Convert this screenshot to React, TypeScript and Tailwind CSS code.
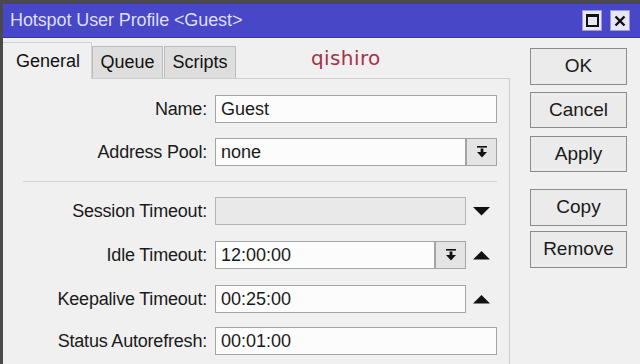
import React from 'react';

const font = { fontFamily: '"Liberation Sans", Arial, sans-serif' };

const DropIcon = () => (
  <svg width="12" height="14" viewBox="0 0 12 14">
    <rect x="1" y="1" width="10" height="1.6" fill="#111" />
    <rect x="4.6" y="3.5" width="2.8" height="4" fill="#111" />
    <polygon points="1,7 11,7 6,12.5" fill="#111" />
  </svg>
);

const TriDown = () => (
  <svg width="17" height="9" viewBox="0 0 17 9">
    <polygon points="0,0 17,0 8.5,8.5" fill="#111" />
  </svg>
);

const TriUp = () => (
  <svg width="17" height="9" viewBox="0 0 17 9">
    <polygon points="0,8.5 17,8.5 8.5,0" fill="#111" />
  </svg>
);

const Input: React.FC<{ value?: string; w: string; disabled?: boolean }> = ({ value, w, disabled }) => (
  <div
    className={`${w} h-[28px] border flex items-center pl-[5px] text-[18px] text-[#1a1a1a] ${
      disabled ? 'bg-[#e9e9e9] border-[#b4b4b4]' : 'bg-[#fcfcfc] border-[#a4a4a4]'
    }`}
  >
    {value}
  </div>
);

const DropBtn = () => (
  <div className="w-[31px] h-[28px] border border-[#a4a4a4] bg-[#e4e4e4] flex items-center justify-center">
    <DropIcon />
  </div>
);

const Slot: React.FC<{ children?: React.ReactNode }> = ({ children }) => (
  <div className="w-[31px] h-[28px] flex items-center justify-center">{children}</div>
);

const Row: React.FC<{ label: string; children: React.ReactNode; className?: string }> = ({ label, children, className }) => (
  <div className={`flex items-center h-[28px] ${className ?? ''}`}>
    <div className="w-[204px] text-right text-[18px] text-[#1a1a1a] tracking-[-0.2px]">{label}</div>
    <div className="ml-[8px] flex">{children}</div>
  </div>
);

const Btn: React.FC<{ label: string; className: string }> = ({ label, className }) => (
  <div
    className={`w-[97px] border border-[#8c8c8c] bg-[#ebebeb] flex items-center justify-center text-[19px] text-[#1a1a1a] ${className}`}
  >
    {label}
  </div>
);

export default function App() {
  return (
    <div className="w-[640px] h-[364px] overflow-hidden bg-[#f0f0f0] flex flex-col border-l-[3px] border-t-[4px] border-[#4a4a4a]" style={font}>
      {/* Title bar */}
      <div className="h-[34px] bg-[#4747c7] flex items-center pl-[7px] pr-[10px] border-b-[1px] border-[#3434a0]">
        <span className="text-[18px] text-[#dedeff] tracking-[-0.1px]">Hotspot User Profile &lt;Guest&gt;</span>
        <div className="ml-auto flex gap-[8px]">
          <div className="w-[20px] h-[21px] bg-[#e6e6f6] border border-[#9a9ad8] flex items-center justify-center">
            <div className="w-[13px] h-[13px] border-[2px] border-[#111] border-t-[3px]" />
          </div>
          <div className="w-[20px] h-[21px] bg-[#e6e6f6] border border-[#9a9ad8] flex items-center justify-center">
            <svg width="12" height="12" viewBox="0 0 12 12">
              <path d="M1.5 1.5 L10.5 10.5 M10.5 1.5 L1.5 10.5" stroke="#111" strokeWidth="2.4" />
            </svg>
          </div>
        </div>
      </div>

      <div className="flex flex-1">
        {/* Left: tabs + form */}
        <div className="w-[507px] flex flex-col">
          <div className="h-[40px] flex items-end pt-[3px]">
            <div className="w-[89px] h-[37px] bg-[#f0f0f0] border-t border-r border-[#d0d0d0] flex items-center pl-[13px] text-[18px] text-[#111] mb-[-1px] relative">
              General
            </div>
            <div className="w-[71px] h-[32px] bg-[#dedede] border border-b-0 border-[#bcbcbc] flex items-center justify-center text-[18px] text-[#111]">
              Queue
            </div>
            <div className="w-[72px] h-[32px] ml-[1px] bg-[#dedede] border border-b-0 border-[#bcbcbc] flex items-center justify-center text-[18px] text-[#111]">
              Scripts
            </div>
            <div
              className="ml-[75px] mb-[5px] text-[20px] text-[#a83048] tracking-[0.4px]"
              style={{ fontFamily: '"DejaVu Sans", Verdana, sans-serif' }}
            >
              qishiro
            </div>
          </div>

          <div className="flex-1 border-t border-r border-[#cfcfcf] pt-[16px] flex flex-col">
            <Row label="Name:">
              <Input value="Guest" w="w-[282px]" />
            </Row>
            <Row label="Address Pool:" className="mt-[15px]">
              <Input value="none" w="w-[251px]" />
              <DropBtn />
            </Row>
            <div className="mt-[15px] mb-[15px] ml-[20px] w-[474px] h-px bg-[#d2d2d2]" />
            <Row label="Session Timeout:">
              <Input w="w-[251px]" disabled />
              <Slot>
                <TriDown />
              </Slot>
            </Row>
            <Row label="Idle Timeout:" className="mt-[16px]">
              <Input value="12:00:00" w="w-[220px]" />
              <DropBtn />
              <Slot>
                <TriUp />
              </Slot>
            </Row>
            <Row label="Keepalive Timeout:" className="mt-[16px]">
              <Input value="00:25:00" w="w-[251px]" />
              <Slot>
                <TriUp />
              </Slot>
            </Row>
            <Row label="Status Autorefresh:" className="mt-[14px]">
              <Input value="00:01:00" w="w-[282px]" />
            </Row>
          </div>
        </div>

        {/* Right: buttons */}
        <div className="flex flex-col pl-[20px] pt-[10px]">
          <Btn label="OK" className="h-[37px]" />
          <Btn label="Cancel" className="h-[36px] mt-[7px]" />
          <Btn label="Apply" className="h-[36px] mt-[8px]" />
          <Btn label="Copy" className="h-[37px] mt-[17px]" />
          <Btn label="Remove" className="h-[37px] mt-[5px]" />
        </div>
      </div>
    </div>
  );
}
